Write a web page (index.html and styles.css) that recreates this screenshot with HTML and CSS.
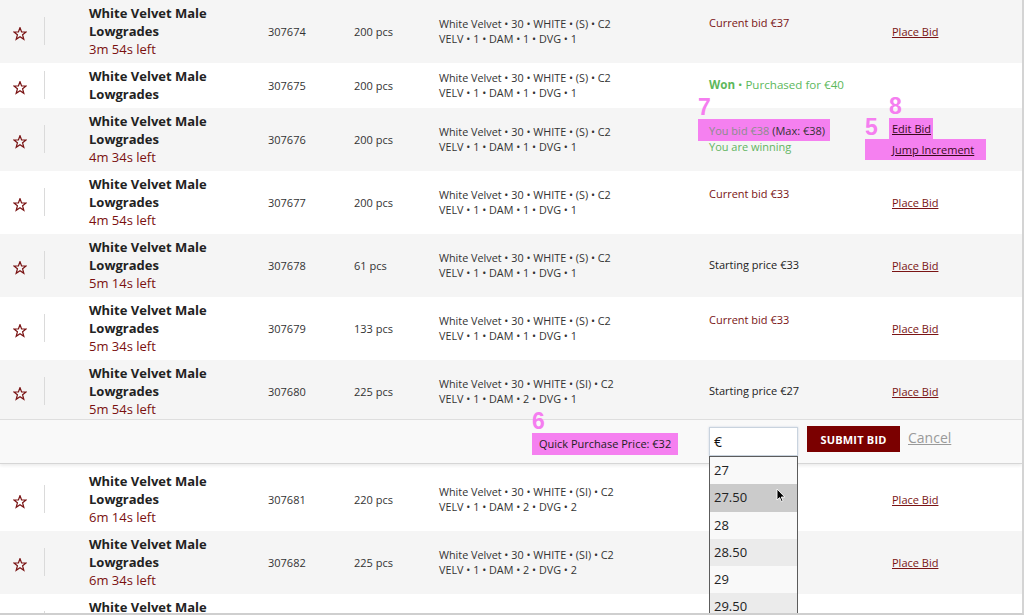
FILE: index.html
```html
<!DOCTYPE html>
<html>
<head>
<meta charset="utf-8">
<link rel="stylesheet" href="styles.css">
</head>
<body>
<div class="frame">

  <div class="row alt">
    <div class="c-star"><svg class="star" viewBox="0 0 14 14"><path d="M7 0.7 L8.6 4.9 L13.1 5 L9.6 7.8 L10.8 12.3 L7 9.7 L3.2 12.3 L4.4 7.8 L0.9 5 L5.4 4.9 Z"/></svg></div>
    <div class="c-sep"></div>
    <div class="c-title"><div class="name">White Velvet Male Lowgrades</div><div class="time">3m 54s left</div></div>
    <div class="c-lot">307674</div>
    <div class="c-qty">200 pcs</div>
    <div class="c-desc">White Velvet • 30 • WHITE • (S) • C2<br>VELV • 1 • DAM • 1 • DVG • 1</div>
    <div class="c-status"><div class="bid">Current bid €37</div></div>
    <div class="c-action"><a class="link">Place Bid</a></div>
  </div>

  <div class="row">
    <div class="c-star"><svg class="star" viewBox="0 0 14 14"><path d="M7 0.7 L8.6 4.9 L13.1 5 L9.6 7.8 L10.8 12.3 L7 9.7 L3.2 12.3 L4.4 7.8 L0.9 5 L5.4 4.9 Z"/></svg></div>
    <div class="c-sep"></div>
    <div class="c-title"><div class="name">White Velvet Male Lowgrades</div></div>
    <div class="c-lot">307675</div>
    <div class="c-qty">200 pcs</div>
    <div class="c-desc">White Velvet • 30 • WHITE • (S) • C2<br>VELV • 1 • DAM • 1 • DVG • 1</div>
    <div class="c-status"><div class="won"><b>Won</b> • Purchased for €40</div></div>
    <div class="c-action"></div>
  </div>

  <div class="row alt">
    <div class="c-star"><svg class="star" viewBox="0 0 14 14"><path d="M7 0.7 L8.6 4.9 L13.1 5 L9.6 7.8 L10.8 12.3 L7 9.7 L3.2 12.3 L4.4 7.8 L0.9 5 L5.4 4.9 Z"/></svg></div>
    <div class="c-sep"></div>
    <div class="c-title"><div class="name">White Velvet Male Lowgrades</div><div class="time">4m 34s left</div></div>
    <div class="c-lot">307676</div>
    <div class="c-qty">200 pcs</div>
    <div class="c-desc">White Velvet • 30 • WHITE • (S) • C2<br>VELV • 1 • DAM • 1 • DVG • 1</div>
    <div class="c-status">
      <div class="yourbid"><span class="hl hl-bid"><span class="tag">7</span><span class="muted">You bid €38</span> (Max: €38)</span></div>
      <div class="winning">You are winning</div>
    </div>
    <div class="c-action">
      <div class="act-line"><span class="hl hl-edit"><span class="tag">8</span><a class="link dark">Edit Bid</a></span></div>
      <div class="act-line"><span class="hl hl-jump"><span class="tag">5</span><a class="link dark">Jump Increment</a></span></div>
    </div>
  </div>

  <div class="row">
    <div class="c-star"><svg class="star" viewBox="0 0 14 14"><path d="M7 0.7 L8.6 4.9 L13.1 5 L9.6 7.8 L10.8 12.3 L7 9.7 L3.2 12.3 L4.4 7.8 L0.9 5 L5.4 4.9 Z"/></svg></div>
    <div class="c-sep"></div>
    <div class="c-title"><div class="name">White Velvet Male Lowgrades</div><div class="time">4m 54s left</div></div>
    <div class="c-lot">307677</div>
    <div class="c-qty">200 pcs</div>
    <div class="c-desc">White Velvet • 30 • WHITE • (S) • C2<br>VELV • 1 • DAM • 1 • DVG • 1</div>
    <div class="c-status"><div class="bid">Current bid €33</div></div>
    <div class="c-action"><a class="link">Place Bid</a></div>
  </div>

  <div class="row alt">
    <div class="c-star"><svg class="star" viewBox="0 0 14 14"><path d="M7 0.7 L8.6 4.9 L13.1 5 L9.6 7.8 L10.8 12.3 L7 9.7 L3.2 12.3 L4.4 7.8 L0.9 5 L5.4 4.9 Z"/></svg></div>
    <div class="c-sep"></div>
    <div class="c-title"><div class="name">White Velvet Male Lowgrades</div><div class="time">5m 14s left</div></div>
    <div class="c-lot">307678</div>
    <div class="c-qty">61 pcs</div>
    <div class="c-desc">White Velvet • 30 • WHITE • (S) • C2<br>VELV • 1 • DAM • 1 • DVG • 1</div>
    <div class="c-status"><div class="start">Starting price €33</div></div>
    <div class="c-action"><a class="link">Place Bid</a></div>
  </div>

  <div class="row">
    <div class="c-star"><svg class="star" viewBox="0 0 14 14"><path d="M7 0.7 L8.6 4.9 L13.1 5 L9.6 7.8 L10.8 12.3 L7 9.7 L3.2 12.3 L4.4 7.8 L0.9 5 L5.4 4.9 Z"/></svg></div>
    <div class="c-sep"></div>
    <div class="c-title"><div class="name">White Velvet Male Lowgrades</div><div class="time">5m 34s left</div></div>
    <div class="c-lot">307679</div>
    <div class="c-qty">133 pcs</div>
    <div class="c-desc">White Velvet • 30 • WHITE • (S) • C2<br>VELV • 1 • DAM • 1 • DVG • 1</div>
    <div class="c-status"><div class="bid">Current bid €33</div></div>
    <div class="c-action"><a class="link">Place Bid</a></div>
  </div>

  <div class="row alt open">
    <div class="c-star"><svg class="star" viewBox="0 0 14 14"><path d="M7 0.7 L8.6 4.9 L13.1 5 L9.6 7.8 L10.8 12.3 L7 9.7 L3.2 12.3 L4.4 7.8 L0.9 5 L5.4 4.9 Z"/></svg></div>
    <div class="c-sep"></div>
    <div class="c-title"><div class="name">White Velvet Male Lowgrades</div><div class="time">5m 54s left</div></div>
    <div class="c-lot">307680</div>
    <div class="c-qty">225 pcs</div>
    <div class="c-desc">White Velvet • 30 • WHITE • (SI) • C2<br>VELV • 1 • DAM • 2 • DVG • 1</div>
    <div class="c-status"><div class="start">Starting price €27</div></div>
    <div class="c-action"><a class="link">Place Bid</a></div>
  </div>

  <div class="panel">
    <div class="quick"><span class="hl hl-quick"><span class="tag">6</span>Quick Purchase Price: €32</span></div>
    <div class="amount">€</div>
    <button class="submit">SUBMIT BID</button>
    <a class="cancel">Cancel</a>
    <div class="dropdown">
      <div class="opt">27</div>
      <div class="opt hover">27.50</div>
      <div class="opt">28</div>
      <div class="opt even">28.50</div>
      <div class="opt">29</div>
      <div class="opt even">29.50</div>
      <svg class="cursor" viewBox="0 0 10 15"><path d="M1 1 L1 12 L3.6 9.6 L5.4 13.6 L7 12.9 L5.3 9 L8.8 9 Z" fill="#000" stroke="#fff" stroke-width="0.9"/></svg>
    </div>
  </div>

  <div class="row">
    <div class="c-star"><svg class="star" viewBox="0 0 14 14"><path d="M7 0.7 L8.6 4.9 L13.1 5 L9.6 7.8 L10.8 12.3 L7 9.7 L3.2 12.3 L4.4 7.8 L0.9 5 L5.4 4.9 Z"/></svg></div>
    <div class="c-sep"></div>
    <div class="c-title"><div class="name">White Velvet Male Lowgrades</div><div class="time">6m 14s left</div></div>
    <div class="c-lot">307681</div>
    <div class="c-qty">220 pcs</div>
    <div class="c-desc">White Velvet • 30 • WHITE • (SI) • C2<br>VELV • 1 • DAM • 2 • DVG • 2</div>
    <div class="c-status"></div>
    <div class="c-action"><a class="link">Place Bid</a></div>
  </div>

  <div class="row alt">
    <div class="c-star"><svg class="star" viewBox="0 0 14 14"><path d="M7 0.7 L8.6 4.9 L13.1 5 L9.6 7.8 L10.8 12.3 L7 9.7 L3.2 12.3 L4.4 7.8 L0.9 5 L5.4 4.9 Z"/></svg></div>
    <div class="c-sep"></div>
    <div class="c-title"><div class="name">White Velvet Male Lowgrades</div><div class="time">6m 34s left</div></div>
    <div class="c-lot">307682</div>
    <div class="c-qty">225 pcs</div>
    <div class="c-desc">White Velvet • 30 • WHITE • (SI) • C2<br>VELV • 1 • DAM • 2 • DVG • 2</div>
    <div class="c-status"></div>
    <div class="c-action"><a class="link">Place Bid</a></div>
  </div>

  <div class="row">
    <div class="c-star"><svg class="star" viewBox="0 0 14 14"><path d="M7 0.7 L8.6 4.9 L13.1 5 L9.6 7.8 L10.8 12.3 L7 9.7 L3.2 12.3 L4.4 7.8 L0.9 5 L5.4 4.9 Z"/></svg></div>
    <div class="c-sep"></div>
    <div class="c-title"><div class="name">White Velvet Male Lowgrades</div><div class="time">6m 54s left</div></div>
    <div class="c-lot">307683</div>
    <div class="c-qty">200 pcs</div>
    <div class="c-desc">White Velvet • 30 • WHITE • (S) • C2<br>VELV • 1 • DAM • 1 • DVG • 1</div>
    <div class="c-status"></div>
    <div class="c-action"><a class="link">Place Bid</a></div>
  </div>

</div>
</body>
</html>
```
FILE: styles.css
```css
* { box-sizing: border-box; }
html, body { margin: 0; padding: 0; background: #fff; }
body { font-family: "Open Sans", "Liberation Sans", sans-serif; color: #222; overflow: hidden; }

.frame {
  width: 1024px;
  height: 615px;
  overflow: hidden;
  position: relative;
  border-right: 2px solid #d4d4d4;
  border-bottom: 2px solid #cfcfcf;
}

.row {
  display: grid;
  grid-template-columns: 44px 45px 179px 86px 85px 270px 183px 1fr;
  align-items: center;
  padding: 4px 0 5px;
  background: #fff;
}
.row.alt { background: #f5f5f5; }
.row.open { padding-bottom: 1px; }

.c-star { padding-left: 13px; padding-top: 5px; display: flex; }
.star { width: 14px; height: 14px; fill: none; stroke: #7a1414; stroke-width: 1.25; stroke-linejoin: miter; }
.c-sep { width: 1px; height: 28px; background: #dadada; }

.name { font-weight: 700; font-size: 13px; line-height: 18px; color: #222; width: 140px; }
.time { font-size: 13px; line-height: 18px; color: #7a1010; }

.c-lot, .c-qty { font-size: 11px; color: #333; }
.c-desc { font-size: 10.8px; line-height: 15px; color: #333; }

.c-status { font-size: 11px; line-height: 16px; }
.bid { color: #7a1414; margin-bottom: 16px; }
.start { color: #222; }
.won { color: #5cb85c; font-size: 11.6px; }
.won b { font-weight: 700; }
.yourbid { color: #333; }
.muted { color: #8c8c8c; }
.winning { color: #62b462; }

.c-action { font-size: 11px; }
.link { color: #7a1414; text-decoration: underline; }
.link.dark { color: #3a0a1a; }
.act-line { line-height: 21px; }

.hl { position: relative; background: #f580f0; }
.hl-bid { padding: 4px 5px 3px 11px; margin-left: -11px; }
.hl-edit { padding: 3px 2px 3px 3px; margin-left: -3px; }
.hl-jump { padding: 3px 12px 3px 27px; margin-left: -27px; }
.hl-quick { padding: 4px 7px; display: inline-block; line-height: 14px; white-space: nowrap; }

.tag {
  position: absolute;
  left: 0;
  bottom: 100%;
  font-family: "Liberation Sans", sans-serif;
  font-weight: 700;
  font-size: 23px;
  line-height: 1;
  color: #f57ef0;
}

.panel {
  position: relative;
  display: flex;
  align-items: flex-start;
  height: 45px;
  padding-left: 532px;
  background: #f9f9f9;
  border-top: 1px solid #dedede;
  border-bottom: 1px solid #d6d6d6;
  box-shadow: 0 2px 3px rgba(0, 0, 0, 0.07);
  margin-bottom: 4px;
  z-index: 2;
}
.quick { margin-top: 13px; font-size: 11px; color: #222; width: 142px; flex: none; white-space: nowrap; }
.amount {
  margin-left: 35px;
  margin-top: 7px;
  width: 89px;
  height: 29px;
  flex: none;
  background: #fff;
  border: 1px solid #c9d3de;
  box-shadow: 0 0 2px rgba(120, 150, 190, 0.35);
  font-size: 14px;
  line-height: 27px;
  padding-left: 4px;
  color: #111;
}
.submit {
  margin-left: 9px;
  margin-top: 6px;
  width: 93px;
  height: 26px;
  flex: none;
  border: 0;
  background: #7b0000;
  color: #fff;
  font-family: "Open Sans", sans-serif;
  font-weight: 700;
  font-size: 11px;
  letter-spacing: 0.2px;
  padding: 0;
}
.cancel {
  margin-left: 8px;
  margin-top: 8px;
  font-size: 14px;
  line-height: 20px;
  color: #9a9a9a;
  text-decoration: underline;
}

.dropdown {
  position: absolute;
  left: 709px;
  top: 36px;
  width: 89px;
  height: 180px;
  border: 1px solid #5c5c5c;
  background: #f9f9f9;
}
.opt {
  height: 27.3px;
  line-height: 27px;
  padding-left: 4px;
  font-size: 13px;
  color: #222;
  background: #f9f9f9;
}
.opt.hover { background: #cbcbcb; }
.opt.even { background: #ebebeb; }
.cursor { position: absolute; left: 66px; top: 31px; width: 10px; height: 15px; }
```
